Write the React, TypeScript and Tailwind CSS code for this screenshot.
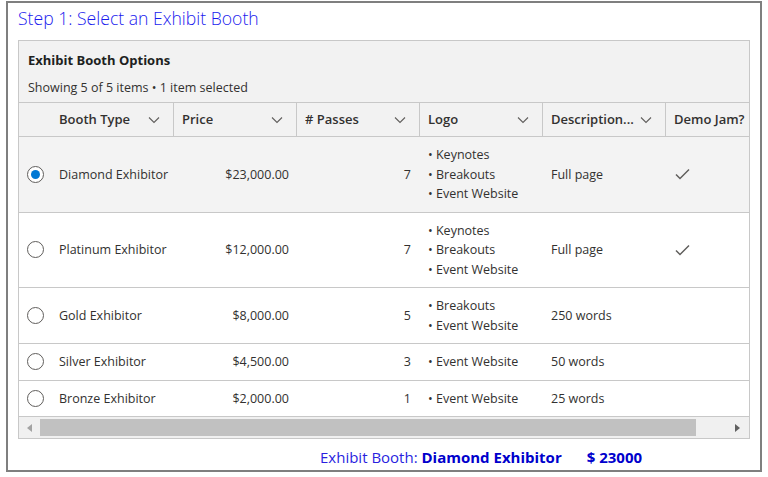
import React from 'react';

interface Booth {
  name: string;
  price: string;
  passes: number;
  logo: string[];
  description: string;
  demoJam: boolean;
}

const booths: Booth[] = [
  { name: 'Diamond Exhibitor', price: '$23,000.00', passes: 7, logo: ['Keynotes', 'Breakouts', 'Event Website'], description: 'Full page', demoJam: true },
  { name: 'Platinum Exhibitor', price: '$12,000.00', passes: 7, logo: ['Keynotes', 'Breakouts', 'Event Website'], description: 'Full page', demoJam: true },
  { name: 'Gold Exhibitor', price: '$8,000.00', passes: 5, logo: ['Breakouts', 'Event Website'], description: '250 words', demoJam: false },
  { name: 'Silver Exhibitor', price: '$4,500.00', passes: 3, logo: ['Event Website'], description: '50 words', demoJam: false },
  { name: 'Bronze Exhibitor', price: '$2,000.00', passes: 1, logo: ['Event Website'], description: '25 words', demoJam: false },
];

const Chevron = () => (
  <svg width="12" height="12" viewBox="0 0 12 12" className="shrink-0">
    <path d="M1 3.5 L6 8.5 L11 3.5" fill="none" stroke="#605e5c" strokeWidth="1.1" />
  </svg>
);

const Check = () => (
  <svg width="15" height="12" viewBox="0 0 15 12">
    <path d="M1 6.5 L5 10.5 L14 1.5" fill="none" stroke="#605e5c" strokeWidth="1.5" />
  </svg>
);

const Radio = ({ checked }: { checked: boolean }) => (
  <div className="w-[17px] h-[17px] rounded-full border border-[#605e5c] flex items-center justify-center bg-white">
    {checked && <div className="w-[9px] h-[9px] rounded-full bg-[#0078d4]" />}
  </div>
);

const HeaderCell = ({ label, first }: { label: string; first?: boolean }) => (
  <div
    className={`${first ? 'w-[155px] pl-[40px]' : 'w-[123px] pl-[8px]'} shrink-0 h-full flex items-center justify-between pr-[13px] border-r border-[#c8c8c8] font-semibold`}
  >
    <span className="truncate">{label}</span>
    <Chevron />
  </div>
);

export default function App() {
  const selected = 0;

  return (
    <div className="font-['Segoe_UI','Open_Sans',sans-serif] text-[#323130] bg-white w-[768px] h-[477px] pt-[1px] px-[6px]">
      <div className="h-[471px] border-2 border-[#7f7f7f] pt-[3px] px-[10px]">
        <div className="text-[17.6px] leading-[24px] text-[#1a1aee] font-light">Step 1: Select an Exhibit Booth</div>

        <div className="mt-[10px] border border-[#c8c8c8] bg-[#f2f2f2] overflow-hidden text-[12.5px]">
          <div className="pl-[9px] pt-[9px] pb-[4px]">
            <div className="font-bold text-[13px] leading-[20px] text-[#201f1e]">Exhibit Booth Options</div>
            <div className="mt-[8px] leading-[20px]">Showing 5 of 5 items • 1 item selected</div>
          </div>

          <div className="flex h-[35px] text-[13px] border-t border-b border-[#c8c8c8] w-[770px]">
            <HeaderCell label="Booth Type" first />
            <HeaderCell label="Price" />
            <HeaderCell label="# Passes" />
            <HeaderCell label="Logo" />
            <HeaderCell label="Description..." />
            <div className="w-[123px] shrink-0 pl-[8px] flex items-center font-semibold">Demo Jam?</div>
          </div>

          {booths.map((b, i) => (
            <div
              key={b.name}
              className={`flex items-center w-[770px] border-b border-[#c8c8c8] py-2 leading-[19.5px] ${i === selected ? 'bg-[#f3f3f3]' : 'bg-white'}`}
            >
              <div className="w-[40px] shrink-0 pl-[8px]">
                <Radio checked={i === selected} />
              </div>
              <div className="w-[115px] shrink-0">{b.name}</div>
              <div className="w-[123px] shrink-0 text-right pr-[8px]">{b.price}</div>
              <div className="w-[123px] shrink-0 text-right pr-[9px]">{b.passes}</div>
              <div className="w-[123px] shrink-0 pl-[8px]">
                {b.logo.map((l) => (
                  <div key={l}>• {l}</div>
                ))}
              </div>
              <div className="w-[123px] shrink-0 pl-[8px]">{b.description}</div>
              <div className="w-[123px] shrink-0 pl-[9px] flex">{b.demoJam && <Check />}</div>
            </div>
          ))}

          <div className="h-[21px] bg-[#f0f0f0] flex items-center">
            <div className="w-[21px] flex justify-center">
              <svg width="6" height="8" viewBox="0 0 6 8"><path d="M5 0 L0 4 L5 8 Z" fill="#a3a3a3" /></svg>
            </div>
            <div className="h-[17px] w-[656px] bg-[#c1c1c1]" />
            <div className="flex-1 flex justify-end pr-[8px]">
              <svg width="6" height="8" viewBox="0 0 6 8"><path d="M0 0 L5 4 L0 8 Z" fill="#606060" /></svg>
            </div>
          </div>
        </div>

        <div className="mt-[8px] pl-[302px] text-[15px] leading-[20px] text-[#2a1fe0] flex">
          <span>Exhibit Booth:&nbsp;</span>
          <span className="font-bold text-[#0000cc]">Diamond Exhibitor</span>
          <span className="font-bold text-[#0000cc] ml-[25px]">$ 23000</span>
        </div>
      </div>
    </div>
  );
}
